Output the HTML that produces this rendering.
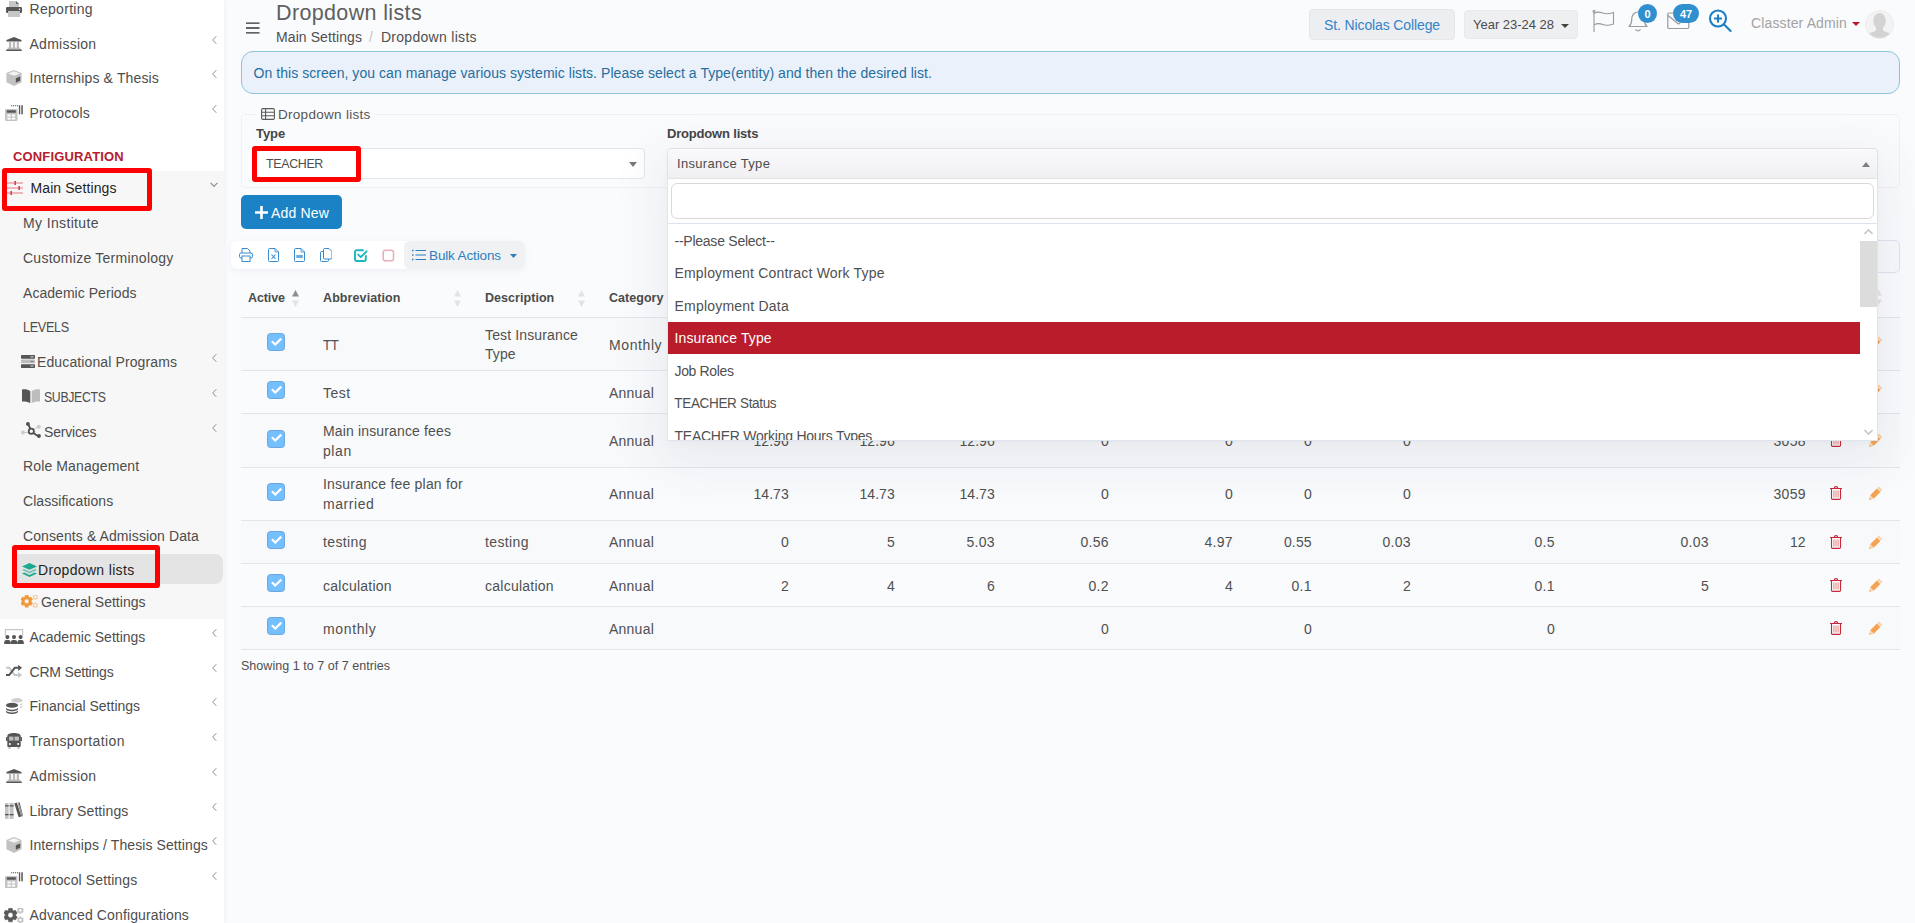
<!DOCTYPE html>
<html lang="en"><head>
<meta charset="utf-8">
<title>Dropdown lists</title>
<style>
*{box-sizing:border-box}
html,body{margin:0;padding:0}
html{overflow:hidden;width:1915px;height:923px}
body{width:1915px;height:923px;overflow:hidden;position:relative;background:#fafbfd;font-family:"Liberation Sans",sans-serif;font-size:14px;color:#4a4a4a}
.abs{position:absolute}
/* ---------- sidebar ---------- */
#sidebar{position:absolute;left:0;top:0;width:224px;height:923px;background:#fff;box-shadow:1px 0 4px rgba(40,50,80,.05)}
#sidebar .open-bg{position:absolute;left:0;top:171px;width:224px;height:448px;background:#f7f7f7}
#sidebar .active-bg{position:absolute;left:17px;top:554px;width:206px;height:30px;background:#e4e4e4;border-radius:0 8px 8px 0}
.mi{position:absolute;left:0;width:224px;height:34px;line-height:34px;white-space:nowrap;color:#4d4d4d;font-size:14px}
.mi .tx{position:absolute;left:29.500px;top:1px}
.mi svg.ic{position:absolute;left:5px;top:8px;width:18px;height:18px}
.mi .ar{position:absolute;left:210.800px;top:8.500px;width:7px;height:10px}
.sub .tx{left:23px}
.hl{position:absolute;border:5px solid #ff0000;border-radius:3px}
/* ---------- header ---------- */
#title{position:absolute;left:276px;top:-1px;font-size:21.5px;line-height:28px;color:#5f5f5f;white-space:nowrap}
#crumb{position:absolute;left:276px;top:27px;font-size:14px;line-height:20px;color:#4f4f4f;white-space:nowrap}
#crumb .sl{color:#c4c4c4;padding:0 7px 0 7px}
#crumb span{display:inline-block}
.btn-top{position:absolute;border-radius:4px;white-space:nowrap;text-align:center}
/* ---------- table ---------- */
.row{position:absolute;left:241px;width:1658px;border-bottom:1px solid #e4e6ea}
.cell{position:absolute;white-space:nowrap;font-size:14px;line-height:20px;color:#505050}
.num{text-align:right;margin-left:.8px}
.chk{position:absolute;left:267px;width:18px;height:18px;border-radius:3.500px;background:#74bffe;border:1px solid #6ba6e0}
.th{position:absolute;top:288px;font-weight:bold;font-size:12.5px;line-height:20px;color:#4b4b4b;white-space:nowrap}
.opt{position:absolute;left:668px;width:1192px;height:32px;line-height:33px;padding-left:6.500px;font-size:14px;color:#505050;white-space:nowrap}
</style>
</head>
<body>

<!-- ================= SIDEBAR ================= -->
<div id="sidebar">
  <div class="open-bg"></div>
  <div class="active-bg"></div>

  <div class="mi" style="top:-9px"><svg class="abs" style="left:6px;top:10px" width="16" height="16" viewBox="0 0 16 16"><path d="M3 0h7l3 3v4H3z" fill="#c6c6c6"></path><path d="M10 0l3 3h-3z" fill="#6a6a6a"></path><rect x="0" y="6" width="16" height="6" rx="1.2" fill="#555"></rect><rect x="2" y="10" width="12" height="6" fill="#c6c6c6"></rect><circle cx="13.6" cy="8.3" r=".8" fill="#fff"></circle></svg><span class="tx" style="letter-spacing: 0.3px;">Reporting</span></div>
  <div class="mi" style="top:26px"><svg class="abs" style="left:6px;top:11px" width="16" height="14" viewBox="0 0 16 14"><path d="M8 0l7.5 3v1.5H.5V3z" fill="#555"></path><rect x="3" y="5" width="2.2" height="6" fill="#bbb"></rect><rect x="6.9" y="5" width="2.2" height="6" fill="#bbb"></rect><rect x="10.8" y="5" width="2.2" height="6" fill="#bbb"></rect><rect x="1.6" y="10.6" width="12.8" height="1.6" fill="#bbb"></rect><rect x=".3" y="12.4" width="15.4" height="1.6" fill="#555"></rect></svg><span class="tx" style="letter-spacing: 0.256px;">Admission</span><svg class="ar" viewBox="0 0 7 10"><path d="M5.300 1.200L1.700 5l3.600 3.800" fill="none" stroke="#8f8f8f" stroke-width="1"></path></svg></div>
  <div class="mi" style="top:60px"><svg class="abs" style="left:6px;top:10px" width="16" height="16" viewBox="0 0 16 16"><path d="M8 0l7.6 2.9v9.4L8 16 .4 12.300V2.900z" fill="#c2c2c2"></path><path d="M8 1.300l5.800 2.200L8 5.800 2.200 3.500z" fill="#f4f4f4"></path><path d="M9.800 8.300l4.400-1.800v4.300l-4.400 1.900z" fill="#555"></path></svg><span class="tx" style="letter-spacing: 0.145px;">Internships &amp; Thesis</span><svg class="ar" viewBox="0 0 7 10"><path d="M5.300 1.200L1.700 5l3.600 3.800" fill="none" stroke="#8f8f8f" stroke-width="1"></path></svg></div>
  <div class="mi" style="top:95px"><svg class="abs" style="left:5px;top:10px" width="18" height="16" viewBox="0 0 18 16"><rect x="0" y="4" width="12.500" height="12" rx="1.200" fill="#c4c4c4"></rect><rect x="1.800" y="5.300" width="9" height="2.400" fill="#555"></rect><rect x="2.400" y="9.500" width="3.300" height="2" fill="#fff"></rect><rect x="6.800" y="9.500" width="3.300" height="2" fill="#fff"></rect><rect x="2.400" y="12.600" width="3.300" height="2" fill="#fff"></rect><rect x="6.800" y="12.600" width="3.300" height="2" fill="#fff"></rect><path d="M6 .3h1.200v1H6zM8 .3h1.200v1H8zM10 .3h1.200v1H10zM12 .3h1.200v1H12z" fill="#555"></path><rect x="13.900" y=".3" width="1.300" height="9" fill="#555"></rect><rect x="16.300" y=".3" width="1.500" height="9" fill="#555"></rect></svg><span class="tx" style="letter-spacing: 0.249px;">Protocols</span><svg class="ar" viewBox="0 0 7 10"><path d="M5.300 1.200L1.700 5l3.600 3.800" fill="none" stroke="#8f8f8f" stroke-width="1"></path></svg></div>

  <div class="abs" style="left: 13px; top: 148px; font-size: 13px; line-height: 18px; font-weight: bold; color: rgb(181, 32, 46); white-space: nowrap; letter-spacing: 0.153px;">CONFIGURATION</div>

  <div class="mi" style="top:170px;color:#1f1f1f"><svg class="abs" style="left:7px;top:11px" width="16" height="14" viewBox="0 0 16 14"><g stroke="#eba3aa" stroke-width="1.300"><path d="M0 2h16M0 7h16M0 12h16"></path></g><g fill="#cf4a58"><rect x="7.300" y="0" width="1.700" height="4"></rect><rect x="11.300" y="5" width="1.700" height="4"></rect><rect x="3.300" y="10" width="1.700" height="4"></rect></g></svg><span class="tx" style="left: 30.5px; letter-spacing: 0.09px;">Main Settings</span><svg class="abs" style="left:210px;top:12px" width="8" height="6" viewBox="0 0 8 6"><path d="M.6.800L4 4.400 7.400.8" fill="none" stroke="#8c8c8c" stroke-width="1.100"></path></svg></div>

  <div class="mi sub" style="top:205px"><span class="tx" style="letter-spacing: 0.359px;">My Institute</span></div>
  <div class="mi sub" style="top:240px"><span class="tx" style="letter-spacing: 0.255px;">Customize Terminology</span></div>
  <div class="mi sub" style="top:275px"><span class="tx" style="letter-spacing: 0.042px;">Academic Periods</span></div>
  <div class="mi sub" style="top:309px"><span class="tx" style="letter-spacing: -0.35px; transform: scaleX(0.9029); transform-origin: 0px 50%;">LEVELS</span></div>
  <div class="mi sub" style="top:344px"><svg class="abs" style="left:21px;top:11px" width="14" height="13" viewBox="0 0 14 13"><rect x="0" y="0" width="14" height="3.700" rx=".7" fill="#555"></rect><rect x="0" y="4.600" width="14" height="3.700" rx=".7" fill="#bdbdbd"></rect><rect x="0" y="9.200" width="14" height="3.700" rx=".7" fill="#555"></rect><g fill="#eee"><rect x="9.500" y="1.400" width="3" height=".9"></rect><rect x="9.500" y="10.600" width="3" height=".9"></rect></g><rect x="9.500" y="6" width="3" height=".9" fill="#777"></rect></svg><span class="tx" style="left: 37px; letter-spacing: 0.117px;">Educational Programs</span><svg class="ar" viewBox="0 0 7 10"><path d="M5.300 1.200L1.700 5l3.600 3.800" fill="none" stroke="#8f8f8f" stroke-width="1"></path></svg></div>
  <div class="mi sub" style="top:379px"><svg class="abs" style="left:22px;top:10px" width="18" height="14" viewBox="0 0 18 14"><path d="M0 .6C3 0 6 .6 8.300 2.200V14C6 12.600 3 12.200 0 12.500z" fill="#555"></path><path d="M18 .6C15 0 12 .6 9.700 2.200V14c2.300-1.400 5.300-1.800 8.300-1.500z" fill="#bdbdbd"></path></svg><span class="tx" style="left: 44px; letter-spacing: -0.35px; transform: scaleX(0.8759); transform-origin: 0px 50%;">SUBJECTS</span><svg class="ar" viewBox="0 0 7 10"><path d="M5.300 1.200L1.700 5l3.600 3.800" fill="none" stroke="#8f8f8f" stroke-width="1"></path></svg></div>
  <div class="mi sub" style="top:414px"><svg class="abs" style="left:21px;top:8px" width="20" height="16" viewBox="0 0 20 16"><g stroke="#c8c8c8" stroke-width="1"><path d="M2 10.500h6M12 8l5-3.500"></path></g><circle cx="2" cy="10.500" r="2.100" fill="#cdcdcd"></circle><circle cx="17.800" cy="4.800" r="2.100" fill="#cdcdcd"></circle><g stroke="#4f4f4f" stroke-width="1.800" fill="none"><path d="M7 2l3 6M12.500 11l5 3.500"></path><circle cx="10.300" cy="9.300" r="2.600" fill="#f7f7f7"></circle></g><circle cx="6.900" cy="1.900" r="1.900" fill="#4f4f4f"></circle><circle cx="18" cy="14" r="1.900" fill="#4f4f4f"></circle></svg><span class="tx" style="left: 44px; letter-spacing: -0.173px;">Services</span><svg class="ar" viewBox="0 0 7 10"><path d="M5.300 1.200L1.700 5l3.600 3.800" fill="none" stroke="#8f8f8f" stroke-width="1"></path></svg></div>
  <div class="mi sub" style="top:448px"><span class="tx" style="letter-spacing: 0.126px;">Role Management</span></div>
  <div class="mi sub" style="top:483px"><span class="tx" style="letter-spacing: 0.048px;">Classifications</span></div>
  <div class="mi sub" style="top:518px"><span class="tx" style="letter-spacing: 0.095px;">Consents &amp; Admission Data</span></div>
  <div class="mi sub" style="top:552px;color:#1f1f1f"><svg class="abs" style="left:22px;top:11px" width="15" height="14" viewBox="0 0 15 14"><path d="M7.500 0L15 3.400 7.500 6.800 0 3.400z" fill="#1aa890"></path><path d="M0 7l2.200-1 5.300 2.400L12.800 6 15 7l-7.500 3.400z" fill="#1aa890" opacity=".55"></path><path d="M0 10.600l2.200-1 5.300 2.400 5.300-2.400 2.200 1L7.500 14z" fill="#1aa890"></path></svg><span class="tx" style="left: 38px; letter-spacing: 0.334px;">Dropdown lists</span></div>
  <div class="mi sub" style="top:584px"><svg class="abs" style="left:20.800px;top:10.800px;color:#f0973a" width="17.500" height="14" viewBox="0 0 20 16"><path d="M4.44 2.22L4.70 0.34L8.30 0.34L8.56 2.22L9.70 2.87L11.46 2.16L13.26 5.28L11.76 6.45L11.76 7.75L13.26 8.92L11.46 12.04L9.70 11.33L8.56 11.98L8.30 13.86L4.70 13.86L4.44 11.98L3.30 11.33L1.54 12.04L-0.26 8.92L1.24 7.75L1.24 6.45L-0.26 5.28L1.54 2.16L3.30 2.87zM3.90 7.10a2.6 2.6 0 1 0 5.2 0a2.6 2.6 0 1 0 -5.2 0z" fill="currentColor" fill-rule="evenodd" stroke="currentColor" stroke-width=".5" stroke-linejoin="round"></path><path d="M15.39 0.01L15.50 -0.98L17.30 -0.98L17.41 0.01L17.97 0.33L18.88 -0.07L19.78 1.49L18.98 2.08L18.98 2.72L19.78 3.31L18.88 4.87L17.97 4.47L17.41 4.79L17.30 5.78L15.50 5.78L15.39 4.79L14.83 4.47L13.92 4.87L13.02 3.31L13.82 2.72L13.82 2.08L13.02 1.49L13.92 -0.07L14.83 0.33zM15.10 2.40a1.3 1.3 0 1 0 2.6 0a1.3 1.3 0 1 0 -2.6 0zM15.39 9.51L15.50 8.52L17.30 8.52L17.41 9.51L17.97 9.83L18.88 9.43L19.78 10.99L18.98 11.58L18.98 12.22L19.78 12.81L18.88 14.37L17.97 13.97L17.41 14.29L17.30 15.28L15.50 15.28L15.39 14.29L14.83 13.97L13.92 14.37L13.02 12.81L13.82 12.22L13.82 11.58L13.02 10.99L13.92 9.43L14.83 9.83zM15.10 11.90a1.3 1.3 0 1 0 2.6 0a1.3 1.3 0 1 0 -2.6 0z" fill="currentColor" fill-rule="evenodd" opacity=".38"></path></svg><span class="tx" style="left: 41px; letter-spacing: 0.013px;">General Settings</span></div>

  <div class="mi" style="top:619px"><svg class="abs" style="left:4px;top:10px" width="20" height="15" viewBox="0 0 20 15"><path d="M1.400 6.500V.600h17.200V6.500" fill="none" stroke="#c6c6c6" stroke-width="1.200"></path><g fill="#555"><circle cx="3.400" cy="8.100" r="2.050"></circle><circle cx="10" cy="8.100" r="2.050"></circle><circle cx="16.600" cy="8.100" r="2.050"></circle><path d="M.2 15v-1.800a2.300 2.300 0 0 1 2.300-2.300h1.800a2.300 2.300 0 0 1 2.300 2.300V15zM6.800 15v-1.800a2.300 2.300 0 0 1 2.300-2.300h1.800a2.300 2.300 0 0 1 2.300 2.300V15zM13.400 15v-1.800a2.300 2.300 0 0 1 2.300-2.300h1.800a2.300 2.300 0 0 1 2.300 2.300V15z"></path></g></svg><span class="tx" style="letter-spacing: -0.009px;">Academic Settings</span><svg class="ar" viewBox="0 0 7 10"><path d="M5.300 1.200L1.700 5l3.600 3.800" fill="none" stroke="#8f8f8f" stroke-width="1"></path></svg></div>
  <div class="mi" style="top:654px"><svg class="abs" style="left:6px;top:11px" width="16" height="13" viewBox="0 0 16 13"><g fill="none" stroke="#c6c6c6" stroke-width="1.900"><path d="M0 2.800h3.200l5.600 7.200h4"></path></g><path d="M12.200 6.900L16 10l-3.800 3.100z" fill="#c6c6c6"></path><g fill="none" stroke="#555" stroke-width="2"><path d="M0 10h3.200l5.600-7.200h4"></path></g><path d="M12.200 -.3L16 2.800l-3.800 3.100z" fill="#555"></path></svg><span class="tx" style="letter-spacing: -0.197px;">CRM Settings</span><svg class="ar" viewBox="0 0 7 10"><path d="M5.300 1.200L1.700 5l3.600 3.800" fill="none" stroke="#8f8f8f" stroke-width="1"></path></svg></div>
  <div class="mi" style="top:688px"><svg class="abs" style="left:6px;top:9.500px" width="17" height="16" viewBox="0 0 17 16"><g fill="#cfcfcf"><ellipse cx="11" cy="2.300" rx="5.600" ry="2.300"></ellipse><path d="M14 6.200c1.600-.4 2.600-1 2.600-1.700V6c0 .6-1 1.200-2.600 1.600zM14 9c1.600-.4 2.600-1 2.600-1.700v1.500c0 .6-1 1.200-2.600 1.600z"></path></g><g fill="#555"><ellipse cx="6" cy="7.300" rx="6" ry="2.500"></ellipse><path d="M0 9.200c0 1.400 2.700 2.500 6 2.500s6-1.100 6-2.500v1.600c0 1.400-2.700 2.500-6 2.500s-6-1.100-6-2.500zM0 12c0 1.400 2.700 2.500 6 2.500s6-1.100 6-2.500v1.500c0 1.400-2.700 2.500-6 2.500s-6-1.100-6-2.500z"></path></g></svg><span class="tx" style="letter-spacing: 0.005px;">Financial Settings</span><svg class="ar" viewBox="0 0 7 10"><path d="M5.300 1.200L1.700 5l3.600 3.800" fill="none" stroke="#8f8f8f" stroke-width="1"></path></svg></div>
  <div class="mi" style="top:723px"><svg class="abs" style="left:6px;top:10px" width="16" height="16" viewBox="0 0 16 16"><rect x="2.300" y="13" width="2.400" height="3" fill="#c4c4c4"></rect><rect x="11.300" y="13" width="2.400" height="3" fill="#c4c4c4"></rect><path d="M1.300 3.300C1.300 1 4 0 8 0s6.700 1 6.700 3.300V13a1 1 0 0 1-1 1H2.300a1 1 0 0 1-1-1z" fill="#555"></path><rect x="0" y="4" width="1.600" height="4" rx=".6" fill="#555"></rect><rect x="14.400" y="4" width="1.600" height="4" rx=".6" fill="#555"></rect><rect x="3" y="3.600" width="4.500" height="4" fill="#bdbdbd"></rect><rect x="8.500" y="3.600" width="4.500" height="4" fill="#bdbdbd"></rect><circle cx="3.800" cy="11" r="1" fill="#fff"></circle><circle cx="12.200" cy="11" r="1" fill="#fff"></circle></svg><span class="tx" style="letter-spacing: 0.411px;">Transportation</span><svg class="ar" viewBox="0 0 7 10"><path d="M5.300 1.200L1.700 5l3.600 3.800" fill="none" stroke="#8f8f8f" stroke-width="1"></path></svg></div>
  <div class="mi" style="top:758px"><svg class="abs" style="left:6px;top:11px" width="16" height="14" viewBox="0 0 16 14"><path d="M8 0l7.5 3v1.5H.5V3z" fill="#555"></path><rect x="3" y="5" width="2.2" height="6" fill="#bbb"></rect><rect x="6.9" y="5" width="2.2" height="6" fill="#bbb"></rect><rect x="10.8" y="5" width="2.2" height="6" fill="#bbb"></rect><rect x="1.6" y="10.6" width="12.8" height="1.6" fill="#bbb"></rect><rect x=".3" y="12.4" width="15.4" height="1.6" fill="#555"></rect></svg><span class="tx" style="letter-spacing: 0.256px;">Admission</span><svg class="ar" viewBox="0 0 7 10"><path d="M5.300 1.200L1.700 5l3.600 3.800" fill="none" stroke="#8f8f8f" stroke-width="1"></path></svg></div>
  <div class="mi" style="top:793px"><svg class="abs" style="left:5px;top:9px" width="18" height="17" viewBox="0 0 18 17"><g fill="#c4c4c4"><rect x="0" y="1" width="3.600" height="16"></rect><rect x="4.600" y="1" width="4" height="16"></rect></g><g fill="#555"><rect x="0" y="3.200" width="3.600" height="1.300"></rect><rect x="4.600" y="3.200" width="4" height="1.300"></rect><rect x="0" y="12" width="3.600" height="1.300"></rect><rect x="4.600" y="12" width="4" height="1.300"></rect></g><path d="M9.300 1.400l2.600-.8 4.400 13.800-2.600.8z" fill="#555"></path><path d="M12.800.700L14.600.2 18 14l-1.500.5z" fill="#555"></path><path d="M13 1l.6-.2 4.200 13.500-.6.200z" fill="#c4c4c4"></path></svg><span class="tx" style="letter-spacing: 0.107px;">Library Settings</span><svg class="ar" viewBox="0 0 7 10"><path d="M5.300 1.200L1.700 5l3.600 3.800" fill="none" stroke="#8f8f8f" stroke-width="1"></path></svg></div>
  <div class="mi" style="top:827px"><svg class="abs" style="left:6px;top:10px" width="16" height="16" viewBox="0 0 16 16"><path d="M8 0l7.6 2.9v9.4L8 16 .4 12.300V2.900z" fill="#c2c2c2"></path><path d="M8 1.300l5.800 2.200L8 5.800 2.200 3.500z" fill="#f4f4f4"></path><path d="M9.800 8.300l4.400-1.800v4.300l-4.400 1.900z" fill="#555"></path></svg><span class="tx" style="letter-spacing: 0.096px;">Internships / Thesis Settings</span><svg class="ar" viewBox="0 0 7 10"><path d="M5.300 1.200L1.700 5l3.600 3.800" fill="none" stroke="#8f8f8f" stroke-width="1"></path></svg></div>
  <div class="mi" style="top:862px"><svg class="abs" style="left:5px;top:10px" width="18" height="16" viewBox="0 0 18 16"><rect x="0" y="4" width="12.500" height="12" rx="1.200" fill="#c4c4c4"></rect><rect x="1.800" y="5.300" width="9" height="2.400" fill="#555"></rect><rect x="2.400" y="9.500" width="3.300" height="2" fill="#fff"></rect><rect x="6.800" y="9.500" width="3.300" height="2" fill="#fff"></rect><rect x="2.400" y="12.600" width="3.300" height="2" fill="#fff"></rect><rect x="6.800" y="12.600" width="3.300" height="2" fill="#fff"></rect><path d="M6 .3h1.200v1H6zM8 .3h1.200v1H8zM10 .3h1.200v1H10zM12 .3h1.200v1H12z" fill="#555"></path><rect x="13.900" y=".3" width="1.300" height="9" fill="#555"></rect><rect x="16.300" y=".3" width="1.500" height="9" fill="#555"></rect></svg><span class="tx" style="letter-spacing: 0.115px;">Protocol Settings</span><svg class="ar" viewBox="0 0 7 10"><path d="M5.300 1.200L1.700 5l3.600 3.800" fill="none" stroke="#8f8f8f" stroke-width="1"></path></svg></div>
  <div class="mi" style="top:897px"><svg class="abs" style="left:3.900px;top:10.900px;color:#595959" width="20" height="16" viewBox="0 0 20 16"><path d="M4.44 2.22L4.70 0.34L8.30 0.34L8.56 2.22L9.70 2.87L11.46 2.16L13.26 5.28L11.76 6.45L11.76 7.75L13.26 8.92L11.46 12.04L9.70 11.33L8.56 11.98L8.30 13.86L4.70 13.86L4.44 11.98L3.30 11.33L1.54 12.04L-0.26 8.92L1.24 7.75L1.24 6.45L-0.26 5.28L1.54 2.16L3.30 2.87zM3.90 7.10a2.6 2.6 0 1 0 5.2 0a2.6 2.6 0 1 0 -5.2 0z" fill="currentColor" fill-rule="evenodd" stroke="currentColor" stroke-width=".5" stroke-linejoin="round"></path><path d="M15.39 0.01L15.50 -0.98L17.30 -0.98L17.41 0.01L17.97 0.33L18.88 -0.07L19.78 1.49L18.98 2.08L18.98 2.72L19.78 3.31L18.88 4.87L17.97 4.47L17.41 4.79L17.30 5.78L15.50 5.78L15.39 4.79L14.83 4.47L13.92 4.87L13.02 3.31L13.82 2.72L13.82 2.08L13.02 1.49L13.92 -0.07L14.83 0.33zM15.10 2.40a1.3 1.3 0 1 0 2.6 0a1.3 1.3 0 1 0 -2.6 0zM15.39 9.51L15.50 8.52L17.30 8.52L17.41 9.51L17.97 9.83L18.88 9.43L19.78 10.99L18.98 11.58L18.98 12.22L19.78 12.81L18.88 14.37L17.97 13.97L17.41 14.29L17.30 15.28L15.50 15.28L15.39 14.29L14.83 13.97L13.92 14.37L13.02 12.81L13.82 12.22L13.82 11.58L13.02 10.99L13.92 9.43L14.83 9.83zM15.10 11.90a1.3 1.3 0 1 0 2.6 0a1.3 1.3 0 1 0 -2.6 0z" fill="currentColor" fill-rule="evenodd" opacity=".38"></path></svg><span class="tx" style="letter-spacing: 0.133px;">Advanced Configurations</span></div>

  <div class="hl" style="left:2px;top:168px;width:150px;height:43px"></div>
  <div class="hl" style="left:12px;top:545px;width:148px;height:43px"></div>
</div>

<!-- ================= HEADER ================= -->
<div id="header">
  <svg class="abs" style="left:246px;top:22px" width="14" height="12" viewBox="0 0 14 12"><path d="M0 1.200h13.500M0 6h13.500M0 10.800h13.500" stroke="#333" stroke-width="1.300" fill="none"></path></svg>
  <div id="title" style="letter-spacing: 0.357px;">Dropdown lists</div>
  <div id="crumb"><span id="crumb1" style="letter-spacing: 0.09px;">Main Settings</span><span class="sl">/</span><span id="crumb2" style="margin-left: 1px; letter-spacing: 0.298px;">Dropdown lists</span></div>

  <div class="btn-top" style="left: 1309px; top: 9px; width: 146px; height: 31px; line-height: 31px; background: rgb(236, 238, 241); border: 1px solid rgb(233, 230, 230); font-size: 14px; color: rgb(53, 131, 198); letter-spacing: -0.12px;">St. Nicolas College</div>
  <div class="btn-top" style="left: 1464px; top: 10px; width: 114px; height: 29px; line-height: 27px; background: rgb(238, 239, 241); border: 1px solid rgb(235, 232, 232); font-size: 13px; color: rgb(75, 75, 75); text-align: left; padding-left: 8px; letter-spacing: -0.016px;" id="yearbtn">Year 23-24 28<svg class="abs" style="left:96px;top:13px" width="8" height="4" viewBox="0 0 8 4"><path d="M0 0h8L4 4z" fill="#444"></path></svg></div>

  <!-- flag -->
  <svg class="abs" style="left:1592px;top:9px" width="24" height="24" viewBox="0 0 24 24"><g fill="none" stroke="#9a9a9a" stroke-width="1.100"><circle cx="2" cy="2.300" r="1"></circle><path d="M2 3.300V23M2.300 4.200c3-1.600 5.500-1.300 8.500-.2s6 1.100 10.700-.6v11.500c-4.700 1.800-7.700 1.700-10.700.6s-5.500-1.400-8.500.2"></path></g></svg>
  <!-- bell -->
  <svg class="abs" style="left:1627px;top:10px" width="22" height="23" viewBox="0 0 22 23"><g fill="none" stroke="#9a9a9a" stroke-width="1.200" stroke-linejoin="round"><path d="M2 16.500c1.800-1.700 2.800-3.400 2.800-7.500 0-4 2.500-7 6.200-7s6.200 3 6.200 7c0 4.100 1 5.800 2.800 7.500z"></path><path d="M8.500 19.300c.7 1.100 1.500 1.700 2.500 1.700s1.800-.6 2.500-1.700"></path></g></svg>
  <div class="abs" style="left:1638px;top:4px;width:19px;height:19px;border-radius:10px;background:#2f8fcf;color:#fff;font-size:11px;font-weight:bold;line-height:21px;text-align:center">0</div>
  <!-- envelope -->
  <svg class="abs" style="left:1667px;top:12px" width="23" height="18" viewBox="0 0 23 18"><g fill="none" stroke="#9a9a9a" stroke-width="1.200" stroke-linejoin="round"><rect x=".8" y="1" width="21" height="15.500" rx="1.200"></rect><path d="M1 3.500l10.500 8.500L22 3.500"></path></g></svg>
  <div class="abs" style="left:1673px;top:4px;width:26px;height:19px;border-radius:10px;background:#2f8fcf;color:#fff;font-size:11px;font-weight:bold;line-height:21px;text-align:center">47</div>
  <!-- search plus -->
  <svg class="abs" style="left:1708px;top:8px" width="25" height="25" viewBox="0 0 25 25"><g fill="none" stroke="#1c7fc2" stroke-width="2.100"><circle cx="10" cy="10.500" r="8"></circle><path d="M15.800 16.300l6.800 6.800" stroke-linecap="round"></path><path d="M6 10.500h8M10 6.500v8" stroke-width="2"></path></g></svg>

  <div class="abs" style="left: 1751px; top: 13px; font-size: 14px; line-height: 20px; color: rgb(163, 163, 163); white-space: nowrap; letter-spacing: 0.132px;">Classter Admin</div>
  <svg class="abs" style="left:1852px;top:22px" width="8" height="4" viewBox="0 0 8 4"><path d="M0 0h8L4 4z" fill="#c0182a"></path></svg>
  <div class="abs" style="left:1865px;top:9.500px;width:29px;height:29px;border-radius:50%;overflow:hidden;background:#f3f3f3;border:1px solid #ececec"><svg class="abs" style="left:-1px;top:-1px" width="29" height="30" viewBox="0 0 29 30"><g fill="#d3d3d3"><ellipse cx="14.500" cy="11" rx="6.200" ry="8"></ellipse><path d="M11 16h7v4.500c2 1.500 6 2 8.500 4V30H2.500v-5.500c2.500-2 6.500-2.500 8.500-4z"></path></g></svg></div>
</div>

<!-- ================= CONTENT ================= -->
<div id="content">
  <!-- info alert -->
  <div class="abs" style="left:241px;top:51px;width:1659px;height:43px;border:1px solid #8fc3d6;border-radius:12px;background:#eaf1fb"></div>
  <div class="abs" style="left: 253.5px; top: 63px; font-size: 14px; line-height: 20px; color: rgb(38, 110, 158); white-space: nowrap; letter-spacing: 0.051px;">On this screen, you can manage various systemic lists. Please select a Type(entity) and then the desired list.</div>

  <!-- fieldset -->
  <div class="abs" style="left:241px;top:114px;width:1659px;height:74px;border:1px dotted #e6e6e9;border-radius:5px"></div>
  <div class="abs" style="left:256px;top:104px;width:118px;height:20px;background:#fafbfd"></div>
  <svg class="abs" style="left:261px;top:108px" width="14" height="12" viewBox="0 0 14 12"><g fill="none" stroke="#5a5a5a" stroke-width="1.100"><rect x=".6" y=".6" width="12.800" height="10.800" rx="1.300"></rect><path d="M.6 4.200h12.800M.6 7.800h12.800M4.600 .6v10.800"></path></g></svg>
  <div id="lg-legend" class="abs" style="left: 278px; top: 105px; font-size: 13.5px; line-height: 20px; color: rgb(85, 85, 85); white-space: nowrap; letter-spacing: 0.29px;">Dropdown lists</div>

  <div id="lb-type" class="abs" style="left: 256px; top: 124px; font-size: 13px; line-height: 20px; font-weight: bold; color: rgb(69, 69, 69); white-space: nowrap; letter-spacing: -0.048px;">Type</div>
  <div class="abs" style="left:256px;top:148px;width:389px;height:31px;border:1px solid #e1e6ec;border-radius:4px;background:#fff"></div>
  <div class="abs" style="left: 266px; top: 154px; font-size: 13px; line-height: 20px; color: rgb(77, 77, 77); white-space: nowrap; letter-spacing: -0.35px; transform: scaleX(0.9552); transform-origin: 0px 50%;">TEACHER</div>
  <svg class="abs" style="left:628.500px;top:161.500px" width="8" height="5" viewBox="0 0 8 5"><path d="M0 0h8L4 5z" fill="#7a7a7a"></path></svg>

  <div id="lb-ddl" class="abs" style="left: 667px; top: 124px; font-size: 13px; line-height: 20px; font-weight: bold; color: rgb(69, 69, 69); white-space: nowrap; letter-spacing: -0.185px;">Dropdown lists</div>

  <!-- add new -->
  <div class="abs" style="left:241px;top:195px;width:101px;height:34px;border-radius:5px;background:#1c82c6"></div>
  <svg class="abs" style="left:255px;top:206px" width="13" height="13" viewBox="0 0 13 13"><path d="M6.500 0v13M0 6.500h13" stroke="#fff" stroke-width="2.600"></path></svg>
  <div class="abs" style="left: 271px; top: 203px; font-size: 14px; line-height: 20px; color: rgb(255, 255, 255); white-space: nowrap; letter-spacing: 0.17px;">Add New</div>
    <!-- toolbar -->
  <div class="abs" style="left:231px;top:241px;width:294px;height:28px;border-radius:6px;background:#fff;box-shadow:0 2px 6px rgba(60,70,100,.06)"></div>
  <div class="abs" style="left:404px;top:241px;width:121px;height:28px;border-radius:6px;background:#f0f1f3"></div>
  <svg class="abs" style="left:239px;top:248px" width="14" height="14" viewBox="0 0 14 14"><g fill="none" stroke="#3b8bd0" stroke-width="1"><path d="M3 5V.5h5.500L11 3v2"></path><rect x=".5" y="5" width="13" height="5" rx="1.500"></rect><rect x="3" y="8" width="8" height="5.500" fill="#fff"></rect></g></svg>
  <svg class="abs" style="left:268px;top:248px" width="11" height="14" viewBox="0 0 11 14"><g fill="none" stroke="#3b8bd0" stroke-width="1"><path d="M.5 1.500a1 1 0 0 1 1-1h5.500l3.500 3.500v8.500a1 1 0 0 1-1 1h-8a1 1 0 0 1-1-1z"></path><path d="M7 .5V4h3.500" stroke-width=".8"></path><path d="M3.500 6.500l4 4.500M7.500 6.500l-4 4.500" stroke-width="1.100"></path></g></svg>
  <svg class="abs" style="left:293.500px;top:248px" width="11" height="14" viewBox="0 0 11 14"><g fill="none" stroke="#3b8bd0" stroke-width="1"><path d="M.5 1.500a1 1 0 0 1 1-1h5.500l3.500 3.500v8.500a1 1 0 0 1-1 1h-8a1 1 0 0 1-1-1z"></path><path d="M7 .5V4h3.500" stroke-width=".8"></path></g><rect x="2.300" y="7" width="6.500" height="3" fill="#3b8bd0" opacity=".75"></rect></svg>
  <svg class="abs" style="left:319.500px;top:248px" width="12.500" height="14" viewBox="0 0 12.500 14"><g fill="none" stroke="#3b8bd0" stroke-width="1"><path d="M3.500 3.500H1.500a1 1 0 0 0-1 1v8a1 1 0 0 0 1 1h6a1 1 0 0 0 1-1v-1.500"></path><path d="M3.500 1.500a1 1 0 0 1 1-1h4.500L12 3.500v6.500a1 1 0 0 1-1 1H4.500a1 1 0 0 1-1-1z"></path></g></svg>
  <svg class="abs" style="left:353.500px;top:248.500px" width="14" height="13" viewBox="0 0 14 13"><g fill="none" stroke="#1cb7bf" stroke-width="1.900" stroke-linecap="round" stroke-linejoin="round"><path d="M11.800 7v3.300a1.700 1.700 0 0 1-1.700 1.700H2.700A1.700 1.700 0 0 1 1 10.300V2.900a1.700 1.700 0 0 1 1.700-1.700H9"></path><path d="M4.200 5.600l2.600 2.600 5.700-5.900"></path></g></svg>
  <svg class="abs" style="left:382px;top:248.500px" width="13" height="13" viewBox="0 0 13 13"><rect x="1.200" y="1.200" width="10.300" height="10.600" rx="2.300" fill="none" stroke="#e8b1b7" stroke-width="1.600"></rect></svg>
  <svg class="abs" style="left:412px;top:249px" width="14" height="12" viewBox="0 0 14 12"><g stroke="#2a7fc1" stroke-width="1.100" fill="none"><path d="M3.500 1.500H14M3.500 6H14M3.500 10.500H14"></path><path d="M0 1.500h1.500M0 6h1.500M0 10.500h1.500" stroke-width="1.400"></path></g></svg>
  <div class="abs" style="left: 429px; top: 246px; font-size: 13.5px; line-height: 20px; color: rgb(42, 127, 193); white-space: nowrap; letter-spacing: -0.129px;">Bulk Actions</div>
  <svg class="abs" style="left:509.500px;top:253.500px" width="7" height="4" viewBox="0 0 7 4"><path d="M0 0h7L3.500 4z" fill="#2a7fc1"></path></svg>
  <!-- table header -->
  <div class="th" style="left: 248px; letter-spacing: -0.089px;">Active</div><svg class="abs" style="left:292.0px;top:289.500px" width="7" height="17" viewBox="0 0 7 17"><path d="M3.500 0L7 6.500H0z" fill="#8e8e8e"></path><path d="M0 10.500h7L3.500 17z" fill="#e3e3e3"></path></svg>
  <div class="th" style="left: 323px; letter-spacing: 0.099px;">Abbreviation</div><svg class="abs" style="left:454.0px;top:289.500px" width="7" height="17" viewBox="0 0 7 17"><path d="M3.500 0L7 6.500H0z" fill="#e3e3e3"></path><path d="M0 10.500h7L3.500 17z" fill="#e3e3e3"></path></svg>
  <div class="th" style="left: 485px; letter-spacing: 0.049px;">Description</div><svg class="abs" style="left:578.0px;top:289.500px" width="7" height="17" viewBox="0 0 7 17"><path d="M3.500 0L7 6.500H0z" fill="#e3e3e3"></path><path d="M0 10.500h7L3.500 17z" fill="#e3e3e3"></path></svg>
  <div class="th" style="left: 609px; letter-spacing: 0.039px;">Category</div>
  <div class="abs" style="left:241px;top:317px;width:1659px;height:1px;background:#e3e5ea"></div>
  <!-- table rows -->
  <div class="abs" style="left:241px;top:318px;width:1659px;height:53px;background:rgba(60,60,80,.012);border-bottom:1px solid #e3e5ea"></div>
  <div class="chk" style="top:333px"><svg class="abs" style="left:2.500px;top:2.500px" width="12" height="9" viewBox="0 0 12 9"><path d="M.9 4.200l3.300 3.300 6.100-5.900" fill="none" stroke="#fff" stroke-width="2.200" stroke-linecap="butt" stroke-linejoin="miter"></path></svg></div>
  <div class="cell" style="left: 323px; top: 334.5px; letter-spacing: -0.35px; transform: scaleX(0.9385); transform-origin: 0px 50%;">TT</div>
  <div class="cell" style="left: 485px; top: 324.8px; letter-spacing: 0.138px;">Test Insurance</div>
  <div class="cell" style="left: 485px; top: 344.1px; letter-spacing: 0.06px;">Type</div>
  <div class="cell" style="left: 609px; top: 334.5px; letter-spacing: 0.596px;">Monthly</div>
  <svg class="abs" style="left:1830px;top:336px" width="12" height="14" viewBox="0 0 12 14"><g fill="none" stroke="#c8283c" stroke-width="1.100"><path d="M0 2.500h12M4.300 2.300c0-1 .7-1.700 1.700-1.700s1.700.7 1.700 1.700"></path><path d="M1.500 2.700v9.600a1.100 1.100 0 0 0 1.100 1.100h6.800a1.100 1.100 0 0 0 1.100-1.100V2.700"></path></g><path d="M3.900 4.500v7M6 4.500v7M8.100 4.500v7" stroke="#ee8f86" stroke-width="1.100" fill="none"></path></svg>
  <svg class="abs" style="left:1868.500px;top:336px" width="14" height="14" viewBox="0 0 14 14"><path d="M9.900.4l3.500 3.500-1.700 1.700-3.500-3.500z" fill="#f8d3ab"></path><path d="M7.900 2.500l3.500 3.500-6.700 6.700-3.500-3.500z" fill="#f5a352"></path><path d="M1 9.500l3.400 3.400-3.300.8-.8-.8z" fill="#f8d3ab"></path><path d="M.2 13.800l.5-1.700 1.200 1.200z" fill="#f29a3e"></path></svg>
  <div class="abs" style="left:241px;top:371px;width:1659px;height:43px;border-bottom:1px solid #e3e5ea"></div>
  <div class="chk" style="top:381px"><svg class="abs" style="left:2.500px;top:2.500px" width="12" height="9" viewBox="0 0 12 9"><path d="M.9 4.200l3.300 3.300 6.100-5.900" fill="none" stroke="#fff" stroke-width="2.200" stroke-linecap="butt" stroke-linejoin="miter"></path></svg></div>
  <div class="cell" style="left: 323px; top: 382.5px; letter-spacing: 0.453px;">Test</div>
  <div class="cell" style="left: 609px; top: 382.5px; letter-spacing: 0.234px;">Annual</div>
  <svg class="abs" style="left:1830px;top:384px" width="12" height="14" viewBox="0 0 12 14"><g fill="none" stroke="#c8283c" stroke-width="1.100"><path d="M0 2.500h12M4.300 2.300c0-1 .7-1.700 1.700-1.700s1.700.7 1.700 1.700"></path><path d="M1.500 2.700v9.600a1.100 1.100 0 0 0 1.100 1.100h6.800a1.100 1.100 0 0 0 1.100-1.100V2.700"></path></g><path d="M3.900 4.500v7M6 4.500v7M8.100 4.500v7" stroke="#ee8f86" stroke-width="1.100" fill="none"></path></svg>
  <svg class="abs" style="left:1868.500px;top:384px" width="14" height="14" viewBox="0 0 14 14"><path d="M9.900.4l3.500 3.500-1.700 1.700-3.500-3.500z" fill="#f8d3ab"></path><path d="M7.900 2.500l3.500 3.500-6.700 6.700-3.500-3.500z" fill="#f5a352"></path><path d="M1 9.500l3.400 3.400-3.300.8-.8-.8z" fill="#f8d3ab"></path><path d="M.2 13.800l.5-1.700 1.200 1.200z" fill="#f29a3e"></path></svg>
  <div class="abs" style="left:241px;top:414px;width:1659px;height:54px;background:rgba(60,60,80,.012);border-bottom:1px solid #e3e5ea"></div>
  <div class="chk" style="top:429.5px"><svg class="abs" style="left:2.500px;top:2.500px" width="12" height="9" viewBox="0 0 12 9"><path d="M.9 4.200l3.300 3.300 6.100-5.900" fill="none" stroke="#fff" stroke-width="2.200" stroke-linecap="butt" stroke-linejoin="miter"></path></svg></div>
  <div class="cell" style="left: 323px; top: 421.3px; letter-spacing: 0.148px;">Main insurance fees</div>
  <div class="cell" style="left: 323px; top: 440.6px; letter-spacing: 0.583px;">plan</div>
  <div class="cell" style="left: 609px; top: 431px; letter-spacing: 0.234px;">Annual</div>
  <div class="cell num" style="left: 728px; width: 60px; top: 431px; letter-spacing: 0.051px;">12.96</div>
  <div class="cell num" style="left: 834px; width: 60px; top: 431px; letter-spacing: 0.051px;">12.96</div>
  <div class="cell num" style="left: 934px; width: 60px; top: 431px; letter-spacing: 0.051px;">12.96</div>
  <div class="cell num" style="left:1048px;width:60px;top:431.0px">0</div>
  <div class="cell num" style="left:1172px;width:60px;top:431.0px">0</div>
  <div class="cell num" style="left:1251px;width:60px;top:431.0px">0</div>
  <div class="cell num" style="left:1350px;width:60px;top:431.0px">0</div>
  <div class="cell num" style="left: 1745px; width: 60px; top: 431px; letter-spacing: 0.286px;">3058</div>
  <svg class="abs" style="left:1830px;top:432.5px" width="12" height="14" viewBox="0 0 12 14"><g fill="none" stroke="#c8283c" stroke-width="1.100"><path d="M0 2.500h12M4.300 2.300c0-1 .7-1.700 1.700-1.700s1.700.7 1.700 1.700"></path><path d="M1.500 2.700v9.600a1.100 1.100 0 0 0 1.100 1.100h6.800a1.100 1.100 0 0 0 1.100-1.100V2.700"></path></g><path d="M3.900 4.500v7M6 4.500v7M8.100 4.500v7" stroke="#ee8f86" stroke-width="1.100" fill="none"></path></svg>
  <svg class="abs" style="left:1868.500px;top:432.5px" width="14" height="14" viewBox="0 0 14 14"><path d="M9.900.4l3.500 3.500-1.700 1.700-3.500-3.500z" fill="#f8d3ab"></path><path d="M7.900 2.500l3.500 3.500-6.700 6.700-3.500-3.500z" fill="#f5a352"></path><path d="M1 9.500l3.400 3.400-3.300.8-.8-.8z" fill="#f8d3ab"></path><path d="M.2 13.800l.5-1.700 1.200 1.200z" fill="#f29a3e"></path></svg>
  <div class="abs" style="left:241px;top:468px;width:1659px;height:53px;border-bottom:1px solid #e3e5ea"></div>
  <div class="chk" style="top:483px"><svg class="abs" style="left:2.500px;top:2.500px" width="12" height="9" viewBox="0 0 12 9"><path d="M.9 4.200l3.300 3.300 6.100-5.900" fill="none" stroke="#fff" stroke-width="2.200" stroke-linecap="butt" stroke-linejoin="miter"></path></svg></div>
  <div class="cell" style="left: 323px; top: 474px; letter-spacing: 0.204px;">Insurance fee plan for</div>
  <div class="cell" style="left: 323px; top: 494.1px; letter-spacing: 0.562px;">married</div>
  <div class="cell" style="left: 609px; top: 483.5px; letter-spacing: 0.234px;">Annual</div>
  <div class="cell num" style="left: 728px; width: 60px; top: 483.5px; letter-spacing: 0.051px;">14.73</div>
  <div class="cell num" style="left: 834px; width: 60px; top: 483.5px; letter-spacing: 0.051px;">14.73</div>
  <div class="cell num" style="left: 934px; width: 60px; top: 483.5px; letter-spacing: 0.051px;">14.73</div>
  <div class="cell num" style="left:1048px;width:60px;top:483.5px">0</div>
  <div class="cell num" style="left:1172px;width:60px;top:483.5px">0</div>
  <div class="cell num" style="left:1251px;width:60px;top:483.5px">0</div>
  <div class="cell num" style="left:1350px;width:60px;top:483.5px">0</div>
  <div class="cell num" style="left: 1745px; width: 60px; top: 483.5px; letter-spacing: 0.286px;">3059</div>
  <svg class="abs" style="left:1830px;top:486px" width="12" height="14" viewBox="0 0 12 14"><g fill="none" stroke="#c8283c" stroke-width="1.100"><path d="M0 2.500h12M4.300 2.300c0-1 .7-1.700 1.700-1.700s1.700.7 1.700 1.700"></path><path d="M1.500 2.700v9.600a1.100 1.100 0 0 0 1.100 1.100h6.800a1.100 1.100 0 0 0 1.100-1.100V2.700"></path></g><path d="M3.900 4.500v7M6 4.500v7M8.100 4.500v7" stroke="#ee8f86" stroke-width="1.100" fill="none"></path></svg>
  <svg class="abs" style="left:1868.500px;top:486px" width="14" height="14" viewBox="0 0 14 14"><path d="M9.900.4l3.500 3.500-1.700 1.700-3.500-3.500z" fill="#f8d3ab"></path><path d="M7.900 2.500l3.500 3.500-6.700 6.700-3.500-3.500z" fill="#f5a352"></path><path d="M1 9.500l3.400 3.400-3.300.8-.8-.8z" fill="#f8d3ab"></path><path d="M.2 13.800l.5-1.700 1.200 1.200z" fill="#f29a3e"></path></svg>
  <div class="abs" style="left:241px;top:521px;width:1659px;height:43px;background:rgba(60,60,80,.012);border-bottom:1px solid #e3e5ea"></div>
  <div class="chk" style="top:531px"><svg class="abs" style="left:2.500px;top:2.500px" width="12" height="9" viewBox="0 0 12 9"><path d="M.9 4.200l3.300 3.300 6.100-5.900" fill="none" stroke="#fff" stroke-width="2.200" stroke-linecap="butt" stroke-linejoin="miter"></path></svg></div>
  <div class="cell" style="left: 323px; top: 531.5px; letter-spacing: 0.364px;">testing</div>
  <div class="cell" style="left: 485px; top: 531.5px; letter-spacing: 0.364px;">testing</div>
  <div class="cell" style="left: 609px; top: 531.5px; letter-spacing: 0.234px;">Annual</div>
  <div class="cell num" style="left:728px;width:60px;top:531.5px">0</div>
  <div class="cell num" style="left:834px;width:60px;top:531.5px">5</div>
  <div class="cell num" style="left: 934px; width: 60px; top: 531.5px; letter-spacing: 0.287px;">5.03</div>
  <div class="cell num" style="left: 1048px; width: 60px; top: 531.5px; letter-spacing: 0.287px;">0.56</div>
  <div class="cell num" style="left: 1172px; width: 60px; top: 531.5px; letter-spacing: 0.287px;">4.97</div>
  <div class="cell num" style="left: 1251px; width: 60px; top: 531.5px; letter-spacing: 0.162px;">0.55</div>
  <div class="cell num" style="left: 1350px; width: 60px; top: 531.5px; letter-spacing: 0.263px;">0.03</div>
  <div class="cell num" style="left: 1494px; width: 60px; top: 531.5px; letter-spacing: 0.31px;">0.5</div>
  <div class="cell num" style="left: 1648px; width: 60px; top: 531.5px; letter-spacing: 0.263px;">0.03</div>
  <div class="cell num" style="left: 1745px; width: 60px; top: 531.5px; letter-spacing: 0.161px;">12</div>
  <svg class="abs" style="left:1830px;top:534.500px" width="12" height="14" viewBox="0 0 12 14"><g fill="none" stroke="#c8283c" stroke-width="1.100"><path d="M0 2.500h12M4.300 2.300c0-1 .7-1.700 1.700-1.700s1.700.7 1.700 1.700"></path><path d="M1.500 2.700v9.600a1.100 1.100 0 0 0 1.100 1.100h6.800a1.100 1.100 0 0 0 1.100-1.100V2.700"></path></g><path d="M3.900 4.500v7M6 4.500v7M8.100 4.500v7" stroke="#ee8f86" stroke-width="1.100" fill="none"></path></svg>
  <svg class="abs" style="left:1868.500px;top:534.500px" width="14" height="14" viewBox="0 0 14 14"><path d="M9.900.4l3.500 3.500-1.700 1.700-3.500-3.500z" fill="#f8d3ab"></path><path d="M7.900 2.500l3.500 3.500-6.700 6.700-3.500-3.500z" fill="#f5a352"></path><path d="M1 9.500l3.400 3.400-3.300.8-.8-.8z" fill="#f8d3ab"></path><path d="M.2 13.800l.5-1.700 1.200 1.200z" fill="#f29a3e"></path></svg>
  <div class="abs" style="left:241px;top:564px;width:1659px;height:43px;border-bottom:1px solid #e3e5ea"></div>
  <div class="chk" style="top:574px"><svg class="abs" style="left:2.500px;top:2.500px" width="12" height="9" viewBox="0 0 12 9"><path d="M.9 4.200l3.300 3.300 6.100-5.900" fill="none" stroke="#fff" stroke-width="2.200" stroke-linecap="butt" stroke-linejoin="miter"></path></svg></div>
  <div class="cell" style="left: 323px; top: 575.5px; letter-spacing: 0.249px;">calculation</div>
  <div class="cell" style="left: 485px; top: 575.5px; letter-spacing: 0.249px;">calculation</div>
  <div class="cell" style="left: 609px; top: 575.5px; letter-spacing: 0.234px;">Annual</div>
  <div class="cell num" style="left:728px;width:60px;top:575.5px">2</div>
  <div class="cell num" style="left:834px;width:60px;top:575.5px">4</div>
  <div class="cell num" style="left:934px;width:60px;top:575.5px">6</div>
  <div class="cell num" style="left: 1048px; width: 60px; top: 575.5px; letter-spacing: 0.31px;">0.2</div>
  <div class="cell num" style="left:1172px;width:60px;top:575.5px">4</div>
  <div class="cell num" style="left: 1251px; width: 60px; top: 575.5px; letter-spacing: 0.31px;">0.1</div>
  <div class="cell num" style="left:1350px;width:60px;top:575.5px">2</div>
  <div class="cell num" style="left: 1494px; width: 60px; top: 575.5px; letter-spacing: 0.31px;">0.1</div>
  <div class="cell num" style="left:1648px;width:60px;top:575.5px">5</div>
  <svg class="abs" style="left:1830px;top:578px" width="12" height="14" viewBox="0 0 12 14"><g fill="none" stroke="#c8283c" stroke-width="1.100"><path d="M0 2.500h12M4.300 2.300c0-1 .7-1.700 1.700-1.700s1.700.7 1.700 1.700"></path><path d="M1.500 2.700v9.600a1.100 1.100 0 0 0 1.100 1.100h6.800a1.100 1.100 0 0 0 1.100-1.100V2.700"></path></g><path d="M3.900 4.500v7M6 4.500v7M8.100 4.500v7" stroke="#ee8f86" stroke-width="1.100" fill="none"></path></svg>
  <svg class="abs" style="left:1868.500px;top:578px" width="14" height="14" viewBox="0 0 14 14"><path d="M9.900.4l3.500 3.500-1.700 1.700-3.500-3.500z" fill="#f8d3ab"></path><path d="M7.900 2.500l3.500 3.500-6.700 6.700-3.500-3.500z" fill="#f5a352"></path><path d="M1 9.500l3.400 3.400-3.300.8-.8-.8z" fill="#f8d3ab"></path><path d="M.2 13.800l.5-1.700 1.200 1.200z" fill="#f29a3e"></path></svg>
  <div class="abs" style="left:241px;top:607px;width:1659px;height:43px;background:rgba(60,60,80,.012);border-bottom:1px solid #e3e5ea"></div>
  <div class="chk" style="top:617px"><svg class="abs" style="left:2.500px;top:2.500px" width="12" height="9" viewBox="0 0 12 9"><path d="M.9 4.200l3.300 3.300 6.100-5.900" fill="none" stroke="#fff" stroke-width="2.200" stroke-linecap="butt" stroke-linejoin="miter"></path></svg></div>
  <div class="cell" style="left: 323px; top: 618.5px; letter-spacing: 0.638px;">monthly</div>
  <div class="cell" style="left: 609px; top: 618.5px; letter-spacing: 0.234px;">Annual</div>
  <div class="cell num" style="left:1048px;width:60px;top:618.5px">0</div>
  <div class="cell num" style="left:1251px;width:60px;top:618.5px">0</div>
  <div class="cell num" style="left:1494px;width:60px;top:618.5px">0</div>
  <svg class="abs" style="left:1830px;top:621px" width="12" height="14" viewBox="0 0 12 14"><g fill="none" stroke="#c8283c" stroke-width="1.100"><path d="M0 2.500h12M4.300 2.300c0-1 .7-1.700 1.700-1.700s1.700.7 1.700 1.700"></path><path d="M1.500 2.700v9.600a1.100 1.100 0 0 0 1.100 1.100h6.800a1.100 1.100 0 0 0 1.100-1.100V2.700"></path></g><path d="M3.900 4.500v7M6 4.500v7M8.100 4.500v7" stroke="#ee8f86" stroke-width="1.100" fill="none"></path></svg>
  <svg class="abs" style="left:1868.500px;top:621px" width="14" height="14" viewBox="0 0 14 14"><path d="M9.900.4l3.500 3.500-1.700 1.700-3.500-3.500z" fill="#f8d3ab"></path><path d="M7.900 2.500l3.500 3.500-6.700 6.700-3.500-3.500z" fill="#f5a352"></path><path d="M1 9.500l3.400 3.400-3.300.8-.8-.8z" fill="#f8d3ab"></path><path d="M.2 13.800l.5-1.700 1.200 1.200z" fill="#f29a3e"></path></svg>
  <div class="abs" style="left: 241px; top: 657px; font-size: 12.5px; line-height: 18px; color: rgb(79, 79, 79); white-space: nowrap; letter-spacing: 0.036px;">Showing 1 to 7 of 7 entries</div>
  <!-- right-side search box peeking behind dropdown -->
  <div class="abs" style="left:1780px;top:240px;width:120px;height:33px;border:1px solid #dde3f0;border-radius:5px;background:#f8f9fc"></div>
  <svg class="abs" style="left:1874px;top:289px" width="8" height="17" viewBox="0 0 7 17" preserveAspectRatio="none"><path d="M3.500 0L7 6.500H0z" fill="#e3e3e3"></path><path d="M0 10.500h7L3.500 17z" fill="#e3e3e3"></path></svg>
  <!-- select2 dropdown -->
  <div class="abs" style="left:667px;top:148px;width:1211px;height:293px;border-radius:4px;box-shadow:0 16px 50px 10px rgba(70,70,100,.075),0 2px 6px rgba(0,0,0,.025)"></div>
  <div class="abs" style="left:667px;top:148px;width:1211px;height:31px;border:1px solid #e2e2e6;border-radius:4px 4px 0 0;background:linear-gradient(#fafafc,#f0eff2)"></div>
  <div id="sel-ins" class="abs" style="left: 677px; top: 154px; font-size: 13px; line-height: 20px; color: rgb(77, 77, 77); white-space: nowrap; letter-spacing: 0.325px;">Insurance Type</div>
  <svg class="abs" style="left:1862px;top:162px" width="8" height="5" viewBox="0 0 8 5"><path d="M0 5h8L4 0z" fill="#808080"></path></svg>
  <div class="abs" style="left:667px;top:179px;width:1211px;height:262px;background:#fff;border:1px solid #dfe5ee;border-top:none"></div>
  <div class="abs" style="left:671px;top:183px;width:1203px;height:36px;border:1px solid #d9d9d9;border-radius:6px;background:#fff"></div>
  <div class="abs" style="left:668px;top:223px;width:1209px;height:1px;background:#dde3ec"></div>
  <div class="abs" style="left:668px;top:224px;width:1209px;height:216px;overflow:hidden">
  <div class="opt" style="left: 0px; top: 0.5px; letter-spacing: -0.245px;">--Please Select--</div>
  <div class="opt" style="left: 0px; top: 33px; letter-spacing: 0.183px;">Employment Contract Work Type</div>
  <div class="opt" style="left: 0px; top: 65.5px; letter-spacing: 0.208px;">Employment Data</div>
  <div class="opt" style="left: 0px; top: 98px; background: rgb(185, 29, 43); color: rgb(255, 255, 255); letter-spacing: 0.13px;">Insurance Type</div>
  <div class="opt" style="left: 0px; top: 130.5px; letter-spacing: -0.352px;">Job Roles</div>
  <div class="opt" style="left: 0px; top: 163px; letter-spacing: -0.35px; transform: scaleX(0.9661); transform-origin: 0px 50%;">TEACHER Status</div>
  <div class="opt" style="left: 0px; top: 195.5px; letter-spacing: -0.241px;">TEACHER Working Hours Types</div>
  <div class="abs" style="left:1192px;top:0;width:17px;height:215px;background:#fff"></div>
  <div class="abs" style="left:1192px;top:17px;width:17px;height:66px;background:#dcdcdc"></div>
  <svg class="abs" style="left:1196px;top:5px" width="9" height="6" viewBox="0 0 9 6"><path d="M.5 5L4.500 1l4 4" fill="none" stroke="#c6c6c6" stroke-width="1.600"></path></svg>
  <svg class="abs" style="left:1196px;top:205px" width="9" height="6" viewBox="0 0 9 6"><path d="M.5 1L4.500 5l4-4" fill="none" stroke="#c6c6c6" stroke-width="1.600"></path></svg>
  </div>
  <!-- red highlight around TEACHER -->
  <div class="hl" style="left:252px;top:146px;width:109px;height:36px"></div>
  </div>



</body></html>
